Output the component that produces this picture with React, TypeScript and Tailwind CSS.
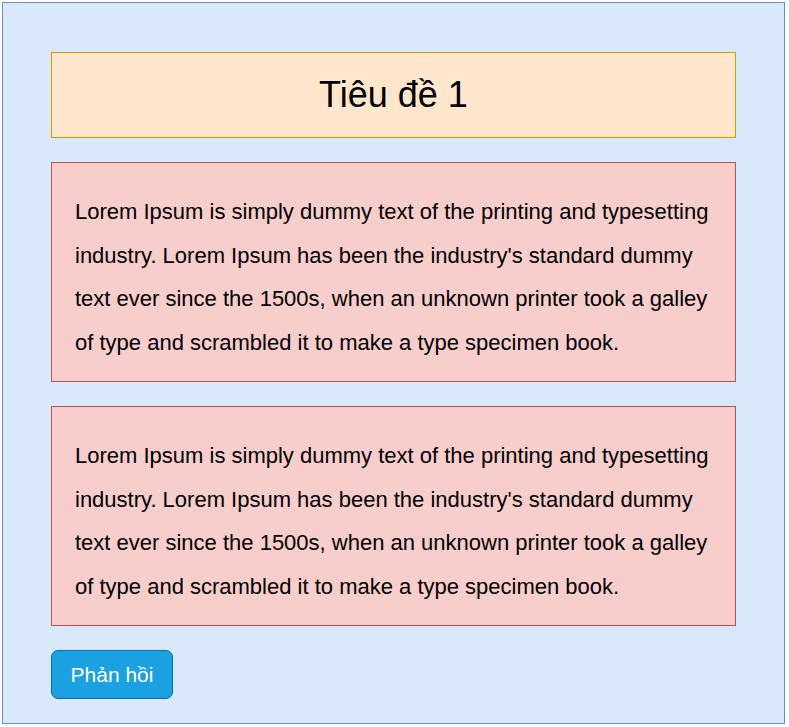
const lorem =
  "Lorem Ipsum is simply dummy text of the printing and typesetting industry. Lorem Ipsum has been the industry's standard dummy text ever since the 1500s, when an unknown printer took a galley of type and scrambled it to make a type specimen book.";

function TextCard({ text }: { text: string }) {
  return (
    <div className="h-[220px] border border-[#b85450] bg-[#f8cecc] px-[23px] pt-[27px]">
      <p className="text-[22px] leading-[43.6px] text-black">{text}</p>
    </div>
  );
}

export default function App() {
  return (
    <div className="p-[2px] font-['Liberation_Sans',Arial,sans-serif]">
      <div className="flex h-[722px] w-[783px] flex-col gap-[24px] border border-[#6c8ebf] bg-[#dae8fc] pl-[48px] pt-[49px]">
        <div className="flex h-[86px] w-[685px] items-center justify-center border border-[#d79b00] bg-[#ffe6cc]">
          <h1 className="text-[36px] text-black">Tiêu đề 1</h1>
        </div>
        <div className="flex w-[685px] flex-col gap-[24px]">
          <TextCard text={lorem} />
          <TextCard text={lorem} />
        </div>
        <div>
          <button className="h-[49px] w-[122px] rounded-[7px] border border-[#006eaf] bg-[#1ba1e2] text-[21px] text-white">
            Phản hồi
          </button>
        </div>
      </div>
    </div>
  );
}
